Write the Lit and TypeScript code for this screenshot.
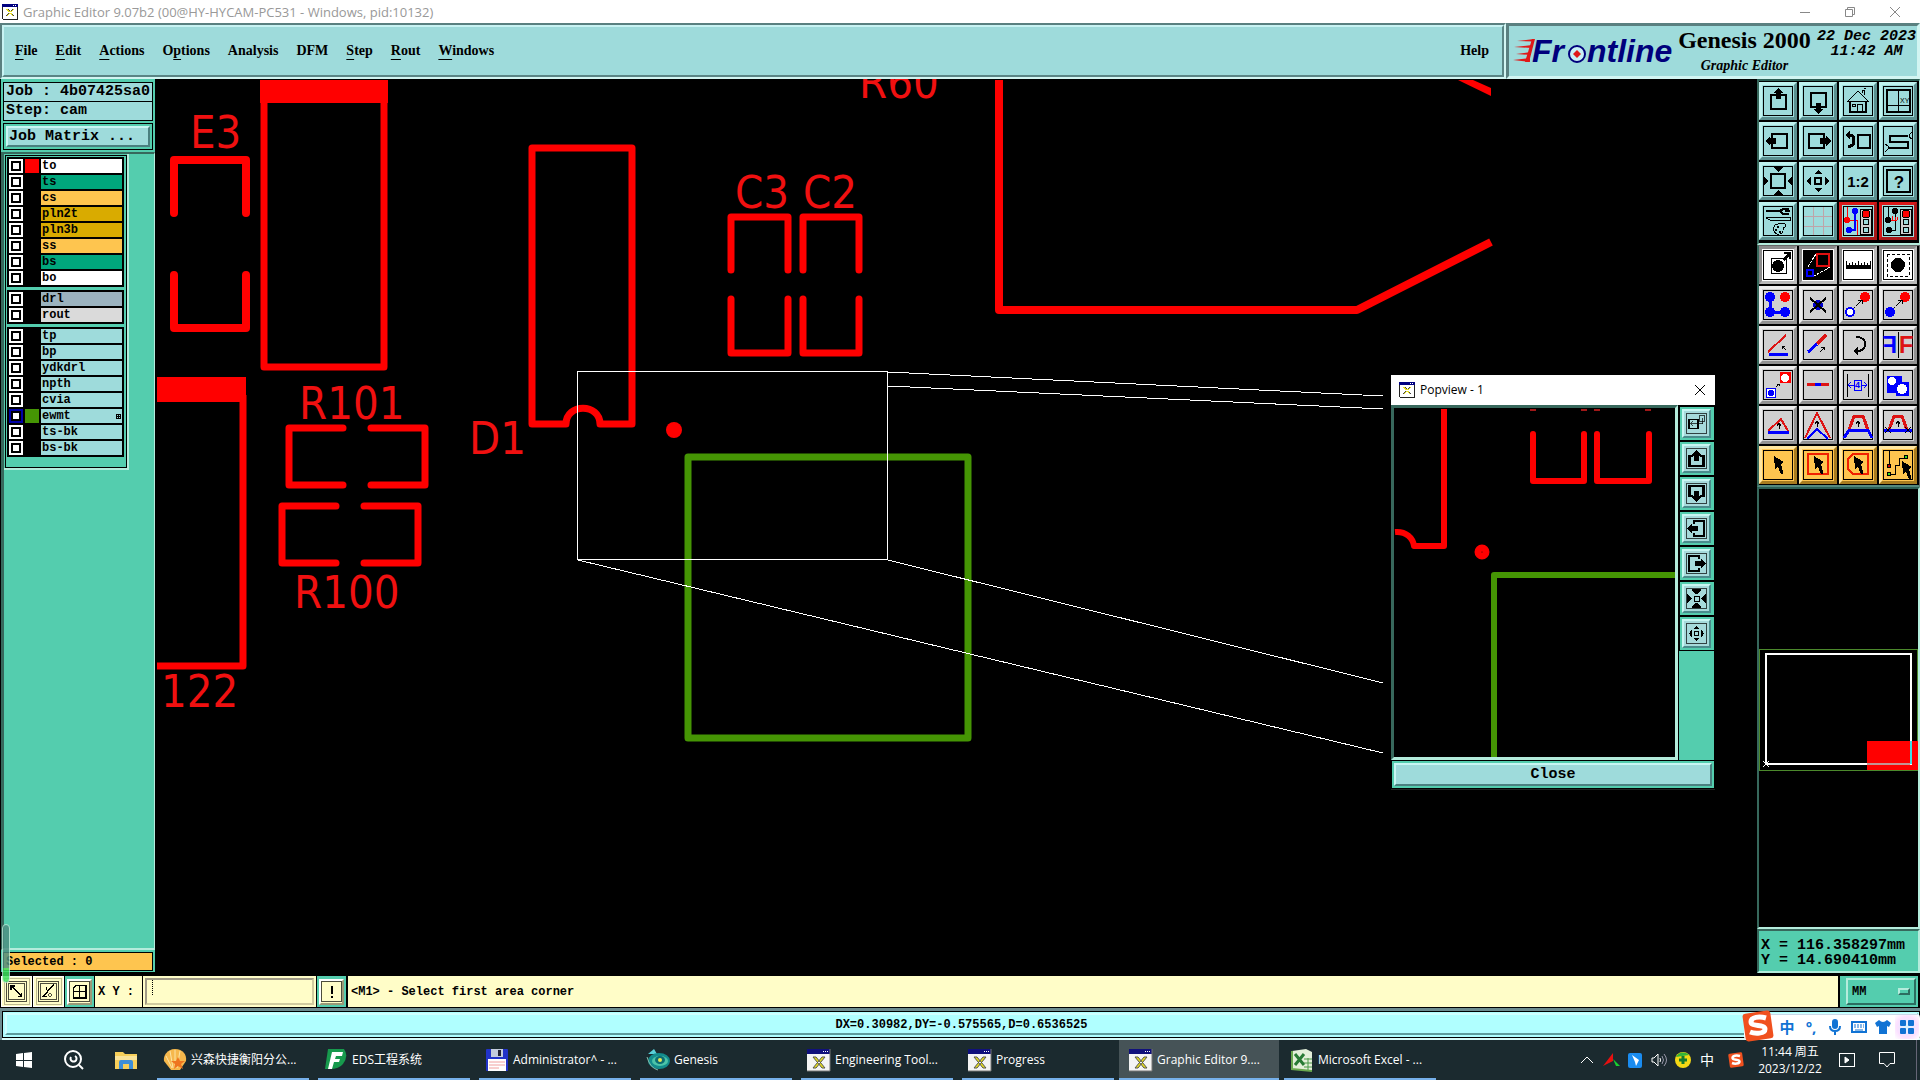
import { LitElement, html, svg, css, nothing } from "lit";
import { customElement } from "lit/decorators.js";
import { classMap } from "lit/directives/class-map.js";
import { styleMap } from "lit/directives/style-map.js";

const RED = "#ff0000";
const PEN = "#dd1414";

/* Tool pictograms, each drawn on a 30 x 30 grid. */
const cursor = svg`<path fill="#000" d="M11 6 21 12 18 14 20 22 20 24 18 24 15 17 12 19Z"/>`;
const upArrow = (x: number, y: number) =>
  svg`<path fill="none" stroke="#000" d="M${x} ${y + 6}V${y}M${x - 2} ${y + 3}L${x} ${y}L${x + 2} ${y + 3}"/>`;
const dashArrow = svg`<path d="M11 18 18 11" stroke="#000" stroke-dasharray="2 1"/><path d="M15 10H19V14" fill="none" stroke="#000"/>`;
const inward = svg`<path d="M10 1H20L15 6ZM10 29H20L15 24ZM1 10V20L5 15ZM29 10V20L25 15Z"/>`;
const outward = svg`<path d="M15 4 19 8H11ZM15 26 19 22H11ZM4 15 8 10V20ZM26 15 22 10V20Z"/>`;
const lights = svg`<rect x="17" y="3" width="11" height="25" fill="#cfcfcf" stroke="#000"/>
  <circle cx="23" cy="8" r="4" fill="#f00" stroke="#000"/><circle cx="23" cy="16" r="3" fill="#9edbdb" stroke="#000"/><circle cx="23" cy="24" r="3" fill="#9edbdb" stroke="#000"/>`;

const ICONS: Record<string, unknown> = {
  up: svg`<rect x="8" y="9" width="15" height="14" fill="none" stroke="#000" stroke-width="2"/><path d="M15 2 20 7H18V13H13V7H10Z"/>`,
  down: svg`<rect x="8" y="7" width="15" height="14" fill="none" stroke="#000" stroke-width="2"/><path d="M15 28 20 23H18V17H13V23H10Z"/>`,
  home: svg`<path fill="none" stroke="#000" d="M5 15 15 5 25 15ZM19 7V4H21V9M21 3 23 2"/><path fill="none" stroke="#000" stroke-width="2" d="M7 15V26H23V15"/><path fill="none" stroke="#000" d="M14 26V18H19V26M9 18H12V20H9Z"/>`,
  pane: svg`<rect x="4" y="4" width="23" height="22" fill="none" stroke="#000" stroke-width="2"/><path d="M15 4V26M4 19H27" stroke="#000"/><text x="17" y="17" font-size="7" font-family="Liberation Sans">XY</text>`,
  left: svg`<rect x="9" y="8" width="15" height="14" fill="none" stroke="#000" stroke-width="2"/><path d="M2 15 7 10V12H13V18H7V20Z"/>`,
  right: svg`<rect x="6" y="8" width="15" height="14" fill="none" stroke="#000" stroke-width="2"/><path d="M28 15 23 10V12H17V18H23V20Z"/>`,
  undo: svg`<rect x="15" y="9" width="12" height="13" fill="none" stroke="#000" stroke-width="2"/><path d="M2 9 7 4V14Z"/><path d="M6 9H8Q11 10 11 15Q11 20 5 21" fill="none" stroke="#000" stroke-width="3"/>`,
  ess: svg`<path d="M25 10H7V16H25V22H6" fill="none" stroke="#000" stroke-width="2"/><path d="M29 6 26 9V11L29 13M2 18 5 20V23L2 26" fill="none" stroke="#000"/>`,
  fit: svg`<rect x="8" y="8" width="14" height="14" fill="none" stroke="#000" stroke-width="2"/>${inward}`,
  shrink: svg`<rect x="12" y="12" width="6" height="6" fill="none" stroke="#000" stroke-width="2"/>${outward}`,
  squeeze: svg`<rect x="12" y="12" width="7" height="7" fill="none" stroke="#000" stroke-width="2"/><path d="M8 1H22V4L15 9L8 4ZM8 29H22V26L15 21L8 26ZM1 8V22L8 15ZM29 8V22L22 15Z"/>`,
  ratio: svg`<text x="15" y="21" text-anchor="middle" font-size="15" font-weight="bold" font-family="Liberation Sans">1:2</text>`,
  help: svg`<rect x="4" y="4" width="23" height="22" fill="none" stroke="#000" stroke-width="2"/><text x="16" y="22" text-anchor="middle" font-size="17" font-weight="bold" font-family="Liberation Sans">?</text>`,
  tools: svg`<path d="M3 5H17" stroke="#000" stroke-width="2"/><path d="M26 3H20L17 5 20 8H26M22 5H27" fill="none" stroke="#000" stroke-width="2"/><path d="M7 11H27V14H7L3 12Z" fill="none" stroke="#000"/><path d="M12 19Q22 15 23 20Q22 22 20 22Q21 29 14 28Q8 25 12 19Z" fill="none" stroke="#000"/><path d="M14 20h2v2h-2zM12 23h2v2h-2zM16 25h2v2h-2z"/>`,
  grid: svg`<path d="M10 1V29M20 1V29M1 10H29M1 20H29" stroke="#bfa3a8"/>`,
  netA: svg`<path d="M4 1V14H14V29" fill="none" stroke="#f00"/><circle cx="4" cy="14" r="3" fill="#f00"/><path d="M12 5V24H6" fill="none" stroke="#00f" stroke-width="2"/><circle cx="12" cy="5" r="3" fill="#00f"/><circle cx="6" cy="24" r="3" fill="#00f"/>${lights}`,
  netB: svg`<path d="M5 1V14M12 5V24H6M5 14H9" fill="none" stroke="#000"/><circle cx="5" cy="14" r="3"/><circle cx="12" cy="5" r="3"/><circle cx="6" cy="24" r="3"/><path d="M8 14H14M9 10V14M12 11V14M14 11V14" stroke="#f00"/>${lights}`,
  padOut: svg`<rect x="8" y="8" width="15" height="15" fill="none" stroke="#000"/><circle cx="15" cy="16" r="6"/><path d="M19 9 24 4H21V2H28V9H26V6L21 11Z"/>`,
  popview: svg`<rect x="1" y="1" width="28" height="28"/><path d="M13 4 4 18M27 17 11 26" stroke="#fff" stroke-dasharray="3 1"/><rect x="14" y="4" width="12" height="12" fill="none" stroke="#e01010" stroke-width="2"/><rect x="4" y="20" width="6" height="6" fill="none" stroke="#00f" stroke-width="2"/>`,
  ruler: svg`<path d="M3 15H28V19H3Z"/><path d="M3 11V16M6 13V16M9 12V16M12 13V16M15 11V16M18 13V16M21 12V16M24 13V16M27 11V16" stroke="#000"/>`,
  area: svg`<rect x="4" y="4" width="22" height="22" fill="none" stroke="#000" stroke-dasharray="3 2"/><circle cx="15" cy="15" r="7"/>`,
  chain: svg`<path d="M7 7V22H22" fill="none" stroke="#00f" stroke-width="3"/><g fill="#00f"><circle cx="7" cy="7" r="5"/><circle cx="7" cy="22" r="5"/><circle cx="22" cy="22" r="5"/></g><circle cx="22" cy="7" r="5" fill="#f00"/>`,
  cut: svg`<circle cx="15" cy="15" r="5" fill="#00c"/><path d="M7 8 23 22M23 8 7 22" stroke="#000" stroke-width="2"/>`,
  moveRing: svg`<circle cx="22" cy="7" r="5" fill="#f00"/><circle cx="7" cy="22" r="4" fill="#fff" stroke="#00f" stroke-width="2"/>${dashArrow}`,
  moveDot: svg`<circle cx="22" cy="7" r="5" fill="#f00"/><circle cx="7" cy="22" r="5" fill="#00f"/>${dashArrow}`,
  angle: svg`<path d="M23 5 5 22" stroke="${PEN}" stroke-width="2"/><path d="M6 24H25" stroke="#00f" stroke-width="3"/><path d="M23 20 19 16M19 19V16H22" fill="none" stroke="#000"/>`,
  line: svg`<path d="M23 5 14 14" stroke="${PEN}" stroke-width="3"/><path d="M14 14 5 22" stroke="#00f" stroke-width="3"/><path d="M17 22 21 18M18 17H21V20" fill="none" stroke="#000"/>`,
  turn: svg`<path d="M13 7Q22 7 22 14Q22 21 14 21" fill="none" stroke="#000" stroke-width="2"/><path d="M15 17V25L10 21Z"/>`,
  mirror: svg`<g font-family="Liberation Sans" font-weight="bold" font-size="23"><text x="16" y="23" fill="${PEN}">F</text><text x="-14" y="23" transform="scale(-1 1)" fill="#00f">F</text></g><path d="M15 2V28" stroke="#000"/>`,
  copy: svg`<rect x="17" y="2" width="11" height="11" fill="${RED}"/><circle cx="22" cy="8" r="4" fill="#fff"/><rect x="3" y="18" width="9" height="9" fill="#fff" stroke="#00f"/><circle cx="8" cy="23" r="3" fill="#00f"/><path d="M13 17 16 14M14 14H16V16" fill="none" stroke="#000"/>`,
  merge: svg`<path d="M4 14H26" stroke="${PEN}" stroke-width="3"/><path d="M12 14H18" stroke="#00f" stroke-width="3"/>`,
  width: svg`<path d="M4 4V27M25 4V27" stroke="#000"/><path d="M5 15H11M18 15H24M8 12 5 15 8 18M21 12 24 15 21 18" fill="none" stroke="#00f"/><rect x="11" y="10" width="7" height="10" fill="none" stroke="#00f"/><text x="12" y="18" font-size="9" font-weight="bold" fill="#00f" font-family="Liberation Sans">4</text>`,
  union: svg`<path d="M4 6H19V12H26V26H13V23H4Z" fill="#00f"/><circle cx="9" cy="11" r="4" fill="#fff"/><circle cx="19" cy="19" r="5" fill="#fff"/>`,
  triLow: svg`<path d="M5 21 18 9 25 21" fill="none" stroke="${PEN}" stroke-width="2"/><path d="M5 22H26" stroke="#00f" stroke-width="3"/>${upArrow(16, 13)}`,
  triHigh: svg`<path d="M2 28 14 3 27 28" fill="none" stroke="${PEN}" stroke-width="2"/><path d="M4 29 14 19 25 29" fill="none" stroke="#00f" stroke-width="2"/>${upArrow(14, 11)}`,
  trapLow: svg`<path d="M6 20 11 6H20L25 20" fill="none" stroke="${PEN}" stroke-width="3"/><path d="M1 28 6 20H25L29 28" fill="none" stroke="#00f" stroke-width="3"/>${upArrow(15, 11)}`,
  trapCut: svg`<path d="M6 20 11 6H19L24 20" fill="none" stroke="${PEN}" stroke-width="3"/><path d="M1 20H29" stroke="#00f" stroke-width="3"/><path d="M2 17 8 23M8 17 2 23M22 17 28 23M28 17 22 23" stroke="#000"/>${upArrow(15, 11)}`,
  pick: cursor,
  pickRect: svg`<rect x="5" y="4" width="20" height="20" fill="none" stroke="#f02000" stroke-width="2"/>${cursor}`,
  pickPoly: svg`<path d="M10 4H25V24H10L5 19V9Z" fill="none" stroke="#f02000" stroke-width="2"/>${cursor}`,
  pickNet: svg`<path d="M6 1V15M6 24H12V15H16V8H23" fill="none" stroke="#000"/><circle cx="6" cy="16" r="2" fill="#c00" stroke="#000"/><circle cx="6" cy="24" r="2" fill="#3d2" stroke="#000"/><circle cx="23" cy="7" r="2" fill="#3d2" stroke="#000"/><g transform="translate(8 5)">${cursor}</g>`,
  dock: svg`<rect x="4" y="9" width="13" height="13" fill="none" stroke="#000" stroke-width="2"/><rect x="19" y="4" width="8" height="8" fill="none" stroke="#000"/><path d="M7 15H24V7M10 12 7 15 10 18" fill="none" stroke="#000"/>`,
  dockUp: svg`<path d="M10 12H5V26H25V12H20" fill="none" stroke="#000" stroke-width="3"/><path d="M15 3 23 11H19V18H11V11H7Z"/>`,
  dockDown: svg`<path d="M10 18H5V4H25V18H20" fill="none" stroke="#000" stroke-width="3"/><path d="M15 27 23 19H19V12H11V19H7Z"/>`,
  dockLeft: svg`<path d="M12 9V4H26V26H12V21" fill="none" stroke="#000" stroke-width="3"/><path d="M1 15 9 7V11H17V19H9V23Z"/>`,
  dockRight: svg`<path d="M18 9V4H4V26H18V21" fill="none" stroke="#000" stroke-width="3"/><path d="M29 15 21 7V11H13V19H21V23Z"/>`,
  corner: svg`<rect x="4" y="4" width="22" height="22" fill="none" stroke="#000"/><path d="M7 13V7H13M7 7 22 22M17 22H22V17" fill="none" stroke="#000" stroke-width="2"/>`,
  ruleAngle: svg`<rect x="4" y="4" width="22" height="22" fill="none" stroke="#000"/><path d="M23 5 7 22H13M12 8V13" fill="none" stroke="#000" stroke-width="2"/><circle cx="17" cy="20" r="2" fill="none" stroke="#000"/>`,
  snap: svg`<path d="M10 6H24V24H6V10ZM15 6V24M6 15H24" fill="none" stroke="#000" stroke-width="2"/>`,
  alert: svg`<path d="M14 7H17V19H14ZM14 21H17V24H14Z"/>`,
};

const icon = (name: string) => html`
  <svg class="glyph" viewBox="0 0 30 30" shape-rendering="crispEdges" aria-hidden="true">
    <rect x="0.5" y="0.5" width="29" height="29" fill="none" stroke="#000"></rect>${ICONS[name]}
  </svg>`;

const xIcon = html`
  <svg class="xicon" viewBox="0 0 16 16" shape-rendering="crispEdges" aria-hidden="true">
    <rect width="16" height="16" fill="#fff"></rect><path d="M0 0H1V15H0ZM15 3H16V16H15ZM1 15H16V16H1Z" fill="#222"></path>
    <rect width="16" height="3" fill="#000080"></rect><path d="M11 1h1v1h-1zM13 1h1v1h-1z" fill="#fff"></path>
    <path d="M4 5H6L12 12H10ZM12 5H10L4 12H6Z" fill="#e8e020"></path><path d="M6 5 8 7M10 10 12 12M4 12 7 9M9 7 11 5" stroke="#444" fill="none"></path>
  </svg>`;

const FRAME = css`
  :host { box-sizing: border-box; }
  * { box-sizing: border-box; }
  button, input, select { font: inherit; color: inherit; margin: 0; border-radius: 0; }
  button { padding: 0; border: 0; background: none; cursor: default; }
  .glyph, .xicon { display: block; flex: none; }
  .xicon { width: 16px; height: 16px; }
`;

/* ---------- Title bar and header ---------- */
const MENUS: [string, string, string][] = [
  ["", "F", "ile"], ["", "E", "dit"], ["", "A", "ctions"], ["O", "p", "tions"], ["Analysis", "", ""],
  ["DFM", "", ""], ["", "S", "tep"], ["", "R", "out"], ["", "W", "indows"],
];

@customElement("editor-header")
class EditorHeader extends LitElement {
  static styles = [FRAME, css`
    :host { display: block; color: #000; }
    .title { display: flex; height: 23px; background: #fff; align-items: center; padding-left: 2px; gap: 5px;
      font: 13px/18px "Open Sans", "Noto Sans", sans-serif; color: #999; padding-right: 3px; }
    .title span { flex: 1; }
    .win { width: 45px; height: 20px; display: grid; place-items: center; }
    .controls { display: flex; }
    .bar { display: flex; height: 56px; background: #9edbdb; }
    .menu { flex: 1; display: flex; border: 2px solid; border-color: #5a8080 #d2f5f2 #d2f5f2 #5a8080; }
    .inner { flex: 1; display: flex; align-items: center; border: 2px solid; border-color: #c8f3f3 #5a8585 #5a8585 #c8f3f3;
      padding: 0 13px 0 11px; gap: 18px; font: bold 14px/20px "Liberation Serif", serif; }
    u { text-underline-offset: 4px; text-decoration-thickness: 1px; }
    .help { margin-left: auto; }
    .brand { display: flex; align-items: flex-start; border: 3px solid; border-color: #5a8080 #d2f5f2 #d2f5f2 #5a8080; width: 414px; padding: 0 1px 0 3px; }
    .logo { width: 164px; height: 48px; flex: none; }
    .name { flex: 1; text-align: center; font-family: "Liberation Serif", serif; font-weight: bold; white-space: nowrap; }
    .name h1 { margin: 0; font-size: 24px; line-height: 28px; }
    .name p { margin: 0; padding-top: 2px; font-size: 14px; line-height: 20px; font-style: italic; }
    time { font: italic bold 15px/15px "Liberation Mono", monospace; text-align: center; padding-top: 3px; padding-left: 4px; }
    time span { display: block; }
  `];
  render() {
    return html`
      <div class="title">${xIcon}<span>Graphic Editor 9.07b2 (00@HY-HYCAM-PC531 - Windows, pid:10132)</span>
        <div class="controls">
          <button class="win" aria-label="Minimize"><svg width="12" height="12"><path d="M1 6.500H11" stroke="#888"></path></svg></button>
          <button class="win" aria-label="Restore"><svg width="12" height="12" fill="none" stroke="#888"><path d="M1.500 3.500H8.500V10.500H1.500ZM3.500 3.500V1.500H10.500V8.500H8.500"></path></svg></button>
          <button class="win" aria-label="Close"><svg width="12" height="12"><path d="M1 1 11 11M11 1 1 11" stroke="#888"></path></svg></button>
        </div>
      </div>
      <div class="bar">
        <nav class="menu"><div class="inner">
          ${MENUS.map(([a, b, c]) => html`<button>${a}${b ? html`<u>${b}</u>` : nothing}${c}</button>`)}
          <button class="help">Help</button>
        </div></nav>
        <div class="brand">
          <svg class="logo" viewBox="0 0 164 48" aria-label="Frontline">
            <g fill="#e01818"><path d="M5 15 22 13V15.500ZM2 21 20 19V22ZM4 28 19 26V29ZM1 34 18 32V36Z"></path>
            <path d="M20 13H23L17 36H13Z"></path></g>
            <g font-family="Liberation Sans" font-weight="bold" font-style="italic" font-size="32" fill="#00007c">
              <text x="20" y="36">Fr</text><text x="75" y="36">ntline</text></g>
            <circle cx="65" cy="28" r="8" fill="#c9f0f5" stroke="#00007c" stroke-width="2"></circle>
            <path d="M65 24 69 28 65 32 61 28Z" fill="#e01818"></path>
          </svg>
          <div class="name"><h1>Genesis 2000</h1><p>Graphic Editor</p></div>
          <time><span>22 Dec 2023</span><span>11:42 AM</span></time>
        </div>
      </div>`;
  }
}

/* ---------- Layer column ---------- */
type Layer = { name: string; fill: string; swatch?: string; active?: boolean };
const AQUA = "#9edbdb";
const LAYERS: Layer[][] = [
  [{ name: "to", fill: "#fff", swatch: "#f00" }, { name: "ts", fill: "#00a67c" }, { name: "cs", fill: "#fec54f" },
   { name: "pln2t", fill: "#d9ab00" }, { name: "pln3b", fill: "#d9ab00" }, { name: "ss", fill: "#fec54f" },
   { name: "bs", fill: "#00a67c" }, { name: "bo", fill: "#fff" }],
  [{ name: "drl", fill: "#9bb3bf" }, { name: "rout", fill: "#dadada" }],
  [...["tp", "bp", "ydkdrl", "npth", "cvia"].map((name) => ({ name, fill: AQUA })),
   { name: "ewmt", fill: AQUA, swatch: "#459504", active: true },
   ...["ts-bk", "bs-bk"].map((name) => ({ name, fill: AQUA }))],
];

@customElement("layer-column")
class LayerColumn extends LitElement {
  static styles = [FRAME, css`
    :host { display: flex; flex-direction: column; width: 155px; padding-left: 1px; background: #000; color: #000;
      font: bold 15px/18px "Liberation Mono", monospace; }
    .job { background: #54cdae; padding: 3px 2px 2px; display: flex; flex-direction: column; }
    .field { border: 1px solid #000; background: #9edbdb; height: 20px; padding-left: 2px; white-space: pre; overflow: hidden; }
    .field + .field { margin-top: -1px; }
    .frame { margin-top: 2px; border: 1px solid #000; padding: 2px; }
    .matrix { display: block; width: 100%; height: 21px; text-align: left; padding-left: 1px; background: #9edbdb;
      border: 2px solid; border-color: #c8f6f3 #4a8080 #4a8080 #c8f6f3; line-height: 17px; }
    .panel { flex: 1; background: #54cdae; border: solid; border-width: 2px 1px 2px 3px; border-color: #37685c #b4ecdc #b4ecdc #37685c; }
    .list { width: 125px; border: solid #b4ecdc; border-width: 0 2px 2px 0; padding-top: 1px; }
    .groups { border: 1px solid #000; margin-left: 1px; padding: 1px 2px 10px 1px; display: flex; flex-direction: column; gap: 3px; background: #54cdae; }
    .group { background: #000; padding: 2px; display: grid; gap: 2px; }
    .row { display: grid; grid-template-columns: 14px 14px 1fr; gap: 2px; height: 14px; font-size: 12px; line-height: 14px; }
    .row input { appearance: none; width: 14px; height: 14px; border: 2px solid #fff; background: #fff; box-shadow: inset 0 0 0 2px #000; }
    .row input.active { border-color: #0000a8; }
    .name { display: flex; justify-content: space-between; align-items: center; padding: 0 1px 0 1px; overflow: hidden; }
    .selected { background: #54cdae; padding: 2px 2px 1px; margin-bottom: 2px; }
    .selected output { display: block; height: 19px; border: 1px solid #000; background: #fec54f; font-size: 12px; line-height: 18px; padding-left: 2px; }
  `];
  render() {
    return html`
      <div class="job">
        <div class="field">Job : 4b07425sa0</div>
        <div class="field">Step: cam</div>
        <div class="frame"><button class="matrix">Job Matrix ...</button></div>
      </div>
      <div class="panel"><div class="list"><div class="groups">
        ${LAYERS.map((group) => html`<div class="group">${group.map((l) => html`
          <label class="row"><input type="checkbox" class=${classMap({ active: !!l.active })} />
            <span style=${styleMap({ background: l.swatch ?? "#000" })}></span>
            <span class="name" style=${styleMap({ background: l.fill })}>${l.name}
              ${l.active ? html`<svg width="5" height="5" viewBox="0 0 5 5" shape-rendering="crispEdges"><rect width="5" height="5"></rect><path d="M1 1h1v1H1zM3 1h1v1H3zM1 3h1v1H1zM3 3h1v1H3z" fill="#9edbdb"></path></svg>` : nothing}
            </span></label>`)}</div>`)}
      </div></div></div>
      <div class="selected"><output>Selected : 0</output></div>`;
  }
}

/* ---------- Popview window ---------- */
@customElement("pop-view")
class PopView extends LitElement {
  static styles = [FRAME, css`
    :host { display: block; width: 324px; color: #000; border-bottom: 1px solid #222; }
    header { display: flex; align-items: center; height: 30px; background: #fff; padding: 0 7px 0 8px; gap: 5px;
      font: 12px/18px "Open Sans", "Noto Sans", sans-serif; }
    header span { flex: 1; }
    .x { width: 16px; height: 16px; display: grid; place-items: center; }
    .body { display: flex; background: #000; gap: 1px; }
    .view { flex: 1; border: 3px solid; border-color: #37685c #b4ecdc #b4ecdc #37685c; height: 355px; background: #000; }
    .view svg { display: block; width: 100%; height: 100%; }
    .side { width: 36px; background: #54cdae; border-right: 1px solid #000; border-top: 1px solid #000; }
    .cell { border: 1px solid #000; border-right: 0; height: 35px; padding: 2px; }
    .cell button { width: 29px; height: 29px; background: #a6dadb; display: grid; place-items: center;
      border: 2px solid; border-color: #c8f6f3 #4a8c8c #4a8c8c #c8f6f3; }
    .cell .glyph { width: 21px; height: 21px; }
    .foot { background: #54cdae; border: 1px solid #000; padding: 2px; }
    .foot button { display: block; width: 100%; height: 23px; background: #9edbdb; font: bold 15px/19px "Liberation Mono", monospace;
      border: 2px solid; border-color: #c8f6f3 #4a8080 #4a8080 #c8f6f3; }
  `];
  render() {
    return html`
      <header>${xIcon}<span>Popview - 1</span>
        <button class="x" aria-label="Close window"><svg width="12" height="12"><path d="M1 1 11 11M11 1 1 11" stroke="#000"></path></svg></button></header>
      <div class="body">
        <div class="view"><svg fill="none" stroke="#f00" stroke-width="6" stroke-linejoin="round">
          <path d="M50 1V138H20C19 130 12 123 1 124"></path>
          <circle cx="88" cy="144" r="4" stroke-width="7"></circle>
          <path d="M139 26V73H190V26M203 26V73H255V26" stroke-linecap="round"></path>
          <path d="M136 2H142M187 2H193M200 2H206M251 2H257" stroke="#a01818" stroke-width="2"></path>
          <path d="M281 167H100V349" stroke="#459504"></path>
        </svg></div>
        <div class="side">${["dock", "dockUp", "dockDown", "dockLeft", "dockRight", "squeeze", "shrink"].map((n) => html`
          <div class="cell"><button aria-label=${n}>${icon(n)}</button></div>`)}</div>
      </div>
      <div class="foot"><button>Close</button></div>`;
  }
}

/* ---------- Board canvas ---------- */
@customElement("board-canvas")
class BoardCanvas extends LitElement {
  static styles = [FRAME, css`
    :host { display: block; flex: 1; position: relative; overflow: hidden; background: #000; min-width: 0; }
    .board { position: absolute; inset: 0; width: 100%; height: 100%; }
    .silk { font: 45px "DejaVu Sans Condensed", "DejaVu Sans", sans-serif; fill: #f01010; }
    pop-view { position: absolute; top: 296px; right: 42px; }
  `];
  render() {
    return html`
      <svg class="board" aria-label="Board layout"><g transform="translate(-155 -79)">
        <g class="silk">
          <text x="190" y="148">E3</text><text x="859" y="98">R60</text><text x="735" y="208">C3</text><text x="803" y="208">C2</text>
          <text x="299" y="419">R101</text><text x="469" y="454">D1</text><text x="294" y="608">R100</text><text x="161" y="707">122</text>
        </g>
        <g fill="#f00"><rect x="260" y="80" width="128" height="23"></rect><rect x="157" y="377" width="89" height="25"></rect>
          <path d="M1458 80H1473L1491 88V96Z"></path><circle cx="674" cy="430" r="8"></circle></g>
        <g fill="none" stroke="#f00" stroke-width="7" stroke-linecap="round" stroke-linejoin="round">
          <path d="M174 213V160H246V213M174 275V328H246V275" stroke-width="8"></path>
          <path d="M264 90V367H384V90"></path>
          <path d="M157 666H243V395" stroke-linecap="butt"></path>
          <path d="M343 428H289V485H343M371 428H425V485H371"></path>
          <path d="M336 506H282V563H336M364 506H418V563H364"></path>
          <path d="M566 424H532V148H632V424H600C600 403 566 403 566 424"></path>
          <path d="M731 270V217H788V270M731 299V353H788V299M803 270V217H859V270M803 299V353H859V299"></path>
          <path d="M999 80V310H1357L1491 242" stroke-width="8" stroke-linecap="butt"></path>
        </g>
        <rect x="688" y="457" width="280" height="281" fill="none" stroke="#459504" stroke-width="7" stroke-linejoin="round"></rect>
        <g fill="none" stroke="#fff" shape-rendering="crispEdges"><rect x="577.5" y="371.5" width="310" height="188"></rect>
          <path d="M888 372 1383 396M888 386 1383 409M888 560 1383 683M578 560 1383 753"></path></g>
      </g></svg>
      <pop-view></pop-view>`;
  }
}

/* ---------- Tool column ---------- */
const TOOLS: { tone: string; names: string[] }[][] = [
  [{ tone: "aqua", names: ["up", "down", "home", "pane", "left", "right", "undo", "ess", "fit", "shrink", "ratio", "help", "tools", "grid"] },
   { tone: "alarm", names: ["netA", "netB"] }],
  [{ tone: "white", names: ["padOut", "popview", "ruler", "area"] },
   { tone: "grey", names: ["chain", "cut", "moveRing", "moveDot", "angle", "line", "turn", "mirror", "copy", "merge", "width", "union", "triLow", "triHigh", "trapLow", "trapCut"] },
   { tone: "amber", names: ["pick", "pickRect", "pickPoly", "pickNet"] }],
];

@customElement("tool-column")
class ToolColumn extends LitElement {
  static styles = [FRAME, css`
    :host { display: flex; flex-direction: column; width: 163px; background: #000; color: #000; }
    .tools { display: grid; grid-template-columns: repeat(4, 38px); gap: 2px; justify-content: start; padding: 1px 0 3px 0;
      border: solid; border-width: 2px 1px 2px 2px; border-color: #2c5f55 #b4ecdc #b4ecdc #37685c; }
    .tools + .tools { border-color: #666 #666 #54897d #37685c; border-width: 1px 1px 2px 2px; padding: 0 0 1px 0; }
    button { width: 38px; height: 38px; display: grid; place-items: center; border: 3px solid; }
    .glyph { width: 30px; height: 30px; }
    .aqua { background: #9edbdb; border-color: #bff3ef #5b9090 #5b9090 #bff3ef; }
    .alarm { background: #9edbdb; border-color: #d81818 #a81818 #a81818 #d81818; }
    .white { background: #fff; border-color: #8c8c8c #b8b8b8 #b8b8b8 #8c8c8c; }
    .grey { background: #d0d0d0; border-color: #ededed #929292 #929292 #ededed; }
    .amber { background: #fec54f; border-color: #ffe6a0 #a87c20 #a87c20 #ffe6a0; }
    .map { flex: 1; border: solid; border-width: 2px; border-color: #2c5f55 #b4ecdc #b4ecdc #37685c; display: flex; align-items: center; padding-top: 3px; }
    .map svg { width: 100%; height: 122px; display: block; }
    .xy { background: #54cdae; border: 2px solid; border-color: #37685c #b4ecdc #b4ecdc #37685c; height: 44px; margin-bottom: 1px;
      font: bold 15px/15px "Liberation Mono", monospace; padding: 7px 0 0 2px; white-space: pre; }
  `];
  render() {
    return html`
      ${TOOLS.map((block) => html`<div class="tools">${block.map(({ tone, names }) =>
        names.map((n) => html`<button class=${tone} aria-label=${n}>${icon(n)}</button>`))}</div>`)}
      <div class="map"><svg viewBox="0 0 160 122" shape-rendering="crispEdges" fill="none">
        <rect x="0.5" y="0.500" width="159" height="121" stroke="#4d8a2c"></rect>
        <rect x="109" y="92" width="51" height="29" fill="#f00"></rect>
        <rect x="7" y="5" width="146" height="110" stroke="#fff" stroke-width="2"></rect>
        <path d="M109 115H152" stroke="#c39494" stroke-width="2"></path><path d="M153 92V115" stroke="#3ce0e6" stroke-width="2"></path>
        <path d="M4 112 10 118M10 112 4 118" stroke="#fff"></path>
      </svg></div>
      <div class="xy">X = 116.358297mm<br />Y = 14.690410mm</div>`;
  }
}

/* ---------- Command line and status ---------- */
@customElement("command-bar")
class CommandBar extends LitElement {
  static styles = [FRAME, css`
    :host { display: block; background: #000; color: #000; font: bold 12px/18px "Liberation Mono", monospace; position: relative; }
    .row { display: flex; height: 34px; padding: 2px 2px 1px 1px; gap: 1px; }
    .tool { width: 31px; background: #fffdc8; display: grid; place-items: center; border: 1px solid #fff; }
    .tool button { width: 26px; height: 27px; display: grid; place-items: center; border: 1px solid #bdb992; }
    .tool .glyph { width: 21px; height: 21px; }
    .tool.on { width: 29px; background: #54cdae; border: 0; }
    .tool.on button { width: 25px; height: 26px; background: #fffdc8; border: 2px solid; border-color: #fff #9c9a78 #9c9a78 #fff; }
    label { background: #fffdc8; width: 47px; display: grid; align-items: center; padding-left: 3px; white-space: pre; }
    .entry { background: #fffdc8; width: 173px; padding: 2px; display: flex; }
    .entry input { width: 100%; background: #fffdc8; border: 2px solid; border-color: #a09a86 #d0cba0 #d0cba0 #a09a86; outline: 0; padding: 0; }
    .caret { position: absolute; left: 152px; top: 6px; height: 15px; border-left: 1px dotted #000; }
    .hint { flex: 1; background: #fffdc8; display: flex; align-items: center; padding-left: 3px; margin-left: 1px; }
    .unit { position: relative; background: #54cdae; width: 78px; padding: 2px 2px 2px 6px; display: flex; margin-left: 1px; }
    select { appearance: none; width: 100%; background: #54cdae; border: 2px solid; border-color: #b4ecdc #2c6d60 #2c6d60 #b4ecdc; padding: 0 4px; }
    .nub { position: absolute; right: 8px; top: 12px; width: 12px; height: 7px; background: #54cdae; border: 2px solid; border-color: #b4ecdc #2c6d60 #2c6d60 #b4ecdc; pointer-events: none; }
    .status { height: 32px; background: #d8fbf8; border-top: 3px solid #6d8c90; border-left: 2px solid #6d8c90; padding-bottom: 2px; }
    .status div { height: 27px; border: 1px solid #000; padding: 1px 1px 2px 2px; background: #b0ffff; }
    .status p { margin: 0; height: 22px; border: solid; border-width: 2px; border-color: #d0ffff #5d9c9c #5d9c9c #d0ffff; text-align: center; line-height: 20px; }
    .meter { position: absolute; left: 2px; top: -50px; width: 8px; height: 59px; border: 1px solid #b8e6d4; border-radius: 4px;
      background: linear-gradient(#4e8f82 75%, #3fe060 75%); opacity: 0.85; }
  `];
  render() {
    return html`
      <div class="row">
        <div class="tool"><button aria-label="Corner">${icon("corner")}</button></div>
        <div class="tool"><button aria-label="Angle">${icon("ruleAngle")}</button></div>
        <div class="tool on"><button aria-label="Snap grid">${icon("snap")}</button></div>
        <label for="xy">X Y :</label>
        <div class="entry"><input id="xy" type="text" /><i class="caret"></i></div>
        <div class="tool on"><button aria-label="Alert">${icon("alert")}</button></div>
        <div class="hint">&lt;M1&gt; - Select first area corner</div>
        <div class="unit"><select aria-label="Units"><option>MM</option></select><i class="nub"></i></div>
      </div>
      <div class="status"><div><p>DX=0.30982,DY=-0.575565,D=0.6536525</p></div></div>
      <i class="meter"></i>`;
  }
}

/* ---------- Desktop taskbar ---------- */
const sogou = svg`<rect x="2" y="2" width="28" height="28" rx="3" fill="#f0501e" transform="rotate(-8 16 16)"/>
  <path d="M24 8C17 6 9 7 9 12C9 17 23 14 23 19C23 24 13 24 8 22" fill="none" stroke="#fff" stroke-width="5"/>`;
const APP_ICONS: Record<string, unknown> = {
  shell: svg`<path d="M12 1C4 1 0 8 1 13L8 22H17L23 13C24 7 20 1 12 1Z" fill="#f6b84c"/><path d="M12 2V20M7 3 10 20M17 3 14 20M3 8 9 20" stroke="#fde3a4" fill="none"/><path d="M15 9 17 13 22 13 18 16 20 21 15 18 11 21 12 16 8 13 13 13Z" fill="#ee7520"/>`,
  eds: svg`<path d="M4 1H20Q25 8 19 16Q15 21 6 21H1Z" fill="#17994d"/><path d="M8 4H19L18 8H12L11 11H16L15 14H10L8 21H4Z" fill="#fff"/>`,
  floppy: svg`<rect x="1" y="1" width="22" height="22" rx="1" fill="#2233c8"/><rect x="6" y="1" width="12" height="8" fill="#c4ccdc"/><rect x="13" y="2" width="3" height="6" fill="#223"/><rect x="3" y="11" width="18" height="12" fill="#fff"/><path d="M4 14H20M4 17H20M4 20H14" stroke="#f0a0a0"/>`,
  genesis: svg`<path d="M2 6 8 1 11 6Z" fill="#59d0d8"/><ellipse cx="13" cy="13" rx="11" ry="8" fill="#138c8c"/><ellipse cx="14" cy="13" rx="8" ry="5" fill="#4cc4a8"/><ellipse cx="14" cy="12" rx="5" ry="4" fill="#0c6c74"/><circle cx="14" cy="12" r="2" fill="#e8e850"/><path d="M1 9Q4 20 12 22" stroke="#8ba" fill="none"/>`,
  xapp: svg`<rect x="0" y="1" width="23" height="22" fill="#f4f4f4"/><rect x="0" y="1" width="23" height="5" fill="#10107c"/><path d="M16 3h1v1h-1zM18 3h1v1h-1zM20 3h1v1h-1z" fill="#fff"/><path d="M6 9H9L18 20H15ZM18 9H15L6 20H9Z" fill="#e6de1e" stroke="#555"/><path d="M23 1V23H0" stroke="#777" fill="none"/>`,
  excel: svg`<path d="M2 3 16 1 22 4V23L2 21Z" fill="#e3efd9"/><path d="M2 3V21L22 23" fill="none" stroke="#6aa84f" stroke-width="2"/><path d="M5 6 14 17M14 6 5 17" stroke="#287a35" stroke-width="3"/><path d="M14 11H22M14 15H22M14 19H22M18 10V22" stroke="#4a9a48"/>`,
};
const TASKS: [string, string, boolean?][] = [
  ["shell", "兴森快捷衡阳分公..."], ["eds", "EDS工程系统"], ["floppy", "Administrator^ - ..."], ["genesis", "Genesis"],
  ["xapp", "Engineering Tool..."], ["xapp", "Progress"], ["xapp", "Graphic Editor 9....", true], ["excel", "Microsoft Excel - ..."],
];

@customElement("task-bar")
class TaskBar extends LitElement {
  static styles = [FRAME, css`
    :host { display: flex; position: relative; height: 40px; background: #1b2a2f; color: #fff;
      font: 12px/20px "Open Sans", "Noto Sans CJK SC", sans-serif; }
    .quick { display: flex; width: 153px; align-items: center; flex: none; }
    .quick button { display: grid; place-items: center; width: 48px; height: 40px; }
    .quick button + button { width: 52px; }
    .tasks { display: flex; gap: 1px; flex: 1; min-width: 0; }
    .task { width: 160px; display: flex; align-items: center; gap: 4px; padding: 0 0 0 10px; white-space: nowrap; position: relative; }
    .task svg { width: 24px; height: 24px; flex: none; }
    .task::after { content: ""; position: absolute; left: 4px; right: 4px; bottom: 0; height: 2px; background: #76b0ea; }
    .task.on { background: #465357; }
    .task.on::after { left: 0; right: 0; }
    .tray { display: flex; align-items: center; }
    .tray button { width: 24px; height: 40px; display: grid; place-items: center; }
    .lang { font-size: 14px; }
    .clock { text-align: center; line-height: 17px; width: 74px; }
    .clock span { display: block; }
    .tray .wide { width: 40px; }
    .tray .sogou { width: 34px; }
    .peek { width: 4px; height: 40px; border-left: 1px solid #667; margin-left: 9px; }
    .ime { position: absolute; right: 0; top: -26px; width: 176px; height: 26px; background: #fff; border-radius: 4px; display: flex; align-items: center;
      padding-left: 31px; color: #1173d4; box-shadow: inset 0 1px 0 #c8d8e8; }
    .ime button { width: 24px; height: 24px; display: grid; place-items: center; font-weight: bold; font-size: 15px; }
    .ime .logo { position: absolute; left: -2px; top: -4px; width: 32px; height: 32px; }
    .ime .grid { background: radial-gradient(#d8f4ff, #fbe0ff 60%, #fff); }
  `];
  render() {
    return html`
      <div class="quick">
        <button aria-label="Start"><svg width="16" height="16" fill="#fff"><path d="M0 2 7 1V8H0ZM8 1 16 0V8H8ZM0 9H7V15L0 14ZM8 9H16V16L8 15Z"></path></svg></button>
        <button aria-label="Search"><svg width="20" height="20" fill="none" stroke="#fff" stroke-width="2"><circle cx="9" cy="9" r="8"></circle><path d="M7 7A3 3 0 1 0 11 6"></path><path d="M15 15 19 19"></path></svg></button>
        <button aria-label="Files"><svg width="22" height="20"><path d="M0 2H8L10 4H22V19H0Z" fill="#f7cf5a"></path><path d="M0 6H22V10H0Z" fill="#fbe49a"></path><path d="M4 19V12Q4 10 6 10H16Q18 10 18 12V19H14V14H8V19Z" fill="#3d8ed8"></path></svg></button>
      </div>
      <div class="tasks">${TASKS.map(([i, label, on]) => html`
        <button class=${classMap({ task: true, on: !!on })}><svg viewBox="0 0 24 24" aria-hidden="true">${APP_ICONS[i]}</svg>${label}</button>`)}</div>
      <div class="tray">
        <button aria-label="Show hidden icons"><svg width="14" height="8" fill="none" stroke="#fff"><path d="M1 7 7 1 13 7"></path></svg></button>
        <button aria-label="Monitor"><svg width="17" height="14"><path d="M0 13 10 0 10 8Z" fill="#e81010"></path><path d="M10 6 17 13H13Z" fill="#18d030"></path></svg></button>
        <button aria-label="Bird"><svg width="14" height="15"><rect width="14" height="15" rx="2" fill="#1a8cf0"></rect><path d="M4 2 11 7 8 13 7 9Z" fill="#fff"></path></svg></button>
        <button aria-label="Volume"><svg width="17" height="14" fill="none" stroke="#fff"><path d="M1 5H3L7 1V13L3 9H1ZM9 5Q10 7 9 9"></path><path d="M11 3Q14 7 11 11M13 1Q18 7 13 13" stroke="#99a"></path></svg></button>
        <button aria-label="Guard"><svg width="16" height="16"><circle cx="8" cy="8" r="8" fill="#f4d814"></circle><path d="M1 5A8 8 0 0 1 14 3Z" fill="#35b437"></path><path d="M8 4V12M4 8H12" stroke="#157a2c" stroke-width="3"></path></svg></button>
        <button class="lang" aria-label="Input mode">中</button>
        <button class="sogou" aria-label="Sogou"><svg width="16" height="16" viewBox="0 0 32 32">${sogou}</svg></button>
        <div class="clock"><span>11:44 周五</span><span>2023/12/22</span></div>
        <button class="wide" aria-label="Meet now"><svg width="16" height="14" fill="none" stroke="#fff"><rect x="0.5" y="0.500" width="15" height="13"></rect><path d="M6 4 10 7 6 10Z" fill="#fff"></path></svg></button>
        <button class="wide" aria-label="Notifications"><svg width="16" height="16" fill="none" stroke="#fff"><path d="M0.500 0.500H15.500V11.500H11L8 15 5 11.500H0.500Z"></path></svg></button>
        <i class="peek"></i>
      </div>
      <div class="ime">
        <svg class="logo" viewBox="0 0 32 32">${sogou}</svg>
        <button>中</button><button>°,</button>
        <button aria-label="Voice"><svg width="12" height="16" fill="none" stroke="#1173d4" stroke-width="2"><rect x="4" y="1" width="4" height="8" rx="2" fill="#1173d4"></rect><path d="M1 7Q1 12 6 12Q11 12 11 7M6 12V16"></path></svg></button>
        <button aria-label="Keyboard"><svg width="16" height="12" fill="none" stroke="#1173d4"><rect x="1" y="1" width="14" height="10" stroke-width="2"></rect><path d="M3 4H13M3 6H13" stroke-dasharray="2 1"></path><path d="M4 9H12"></path></svg></button>
        <button aria-label="Skin"><svg width="16" height="14" fill="#1173d4"><path d="M4 0Q8 4 12 0L16 3 14 7 12 6V14H4V6L2 7 0 3Z"></path></svg></button>
        <button class="grid" aria-label="Toolbox"><svg width="14" height="14" fill="#1173d4"><rect width="6" height="6" rx="1"></rect><rect x="8" width="6" height="6" rx="1"></rect><rect y="8" width="6" height="6" rx="1"></rect><rect x="8" y="8" width="6" height="6" rx="1"></rect></svg></button>
      </div>`;
  }
}

@customElement("app-root")
class AppRoot extends LitElement {
  static styles = css`
    :host { display: flex; flex-direction: column; min-height: 100vh; background: #000; }
    .work { flex: 1; display: flex; align-items: stretch; }
  `;
  render() {
    return html`
      <editor-header></editor-header>
      <div class="work"><layer-column></layer-column><board-canvas></board-canvas><tool-column></tool-column></div>
      <command-bar></command-bar>
      <task-bar></task-bar>`;
  }
}
